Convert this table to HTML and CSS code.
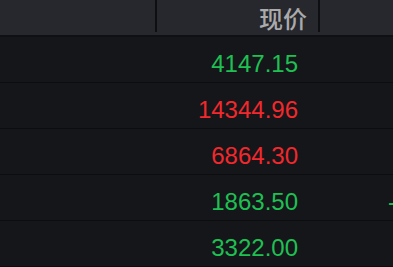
FILE: index.html
```html
<!DOCTYPE html>
<html lang="zh-CN">
<head>
<meta charset="utf-8">
<link rel="stylesheet" href="styles.css">
</head>
<body>
<div class="table">
  <div class="head">
    <div class="hcell c-name"></div>
    <div class="hcell c-price">现价</div>
    <div class="hcell c-chg"></div>
  </div>
  <div class="row">
    <div class="cell c-name"></div>
    <div class="cell c-price up">4147.15</div>
    <div class="cell c-chg"></div>
  </div>
  <div class="row">
    <div class="cell c-name"></div>
    <div class="cell c-price down">14344.96</div>
    <div class="cell c-chg"></div>
  </div>
  <div class="row">
    <div class="cell c-name"></div>
    <div class="cell c-price down">6864.30</div>
    <div class="cell c-chg"></div>
  </div>
  <div class="row">
    <div class="cell c-name"></div>
    <div class="cell c-price up">1863.50</div>
    <div class="cell c-chg up">-0.52%</div>
  </div>
  <div class="row">
    <div class="cell c-name"></div>
    <div class="cell c-price up">3322.00</div>
    <div class="cell c-chg"></div>
  </div>
</div>
</body>
</html>
```
FILE: styles.css
```css
html, body {
  margin: 0;
  padding: 0;
  background: #15161a;
  overflow: hidden;
}
.table {
  width: 393px;
  font-family: "Liberation Sans", Arial, "Noto Sans CJK SC", sans-serif;
}
.head {
  display: flex;
  height: 35px;
  background: #27282d;
  border-bottom: 2px solid #0f1013;
}
.hcell {
  height: 35px;
  box-sizing: border-box;
  color: #aaaaac;
  font-family: "Noto Sans CJK SC", sans-serif;
  font-size: 24px;
  font-weight: 500;
  line-height: 35px;
  flex: none;
}
.hcell.c-name,
.hcell.c-price {
  background: linear-gradient(#0e0f11, #0e0f11) right top / 2px 32px no-repeat;
}
.hcell.c-name {
  width: 157px;
}
.hcell.c-price {
  width: 163px;
  padding-right: 13px;
  text-align: right;
}
.hcell.c-chg {
  flex: 1;
}
.row {
  display: flex;
  height: 45px;
  border-bottom: 1px solid #0c0d0f;
}
.cell {
  box-sizing: border-box;
  padding-top: 9px;
  line-height: 36px;
  font-size: 24px;
  flex: none;
}
.row .c-name {
  width: 157px;
}
.row .c-price {
  width: 161px;
  padding-right: 20px;
  text-align: right;
}
.row .c-chg {
  flex: 1;
  min-width: 0;
  overflow: hidden;
  white-space: nowrap;
  padding-left: 70px;
}
.up {
  color: #1fc052;
}
.down {
  color: #f2282c;
}
```
